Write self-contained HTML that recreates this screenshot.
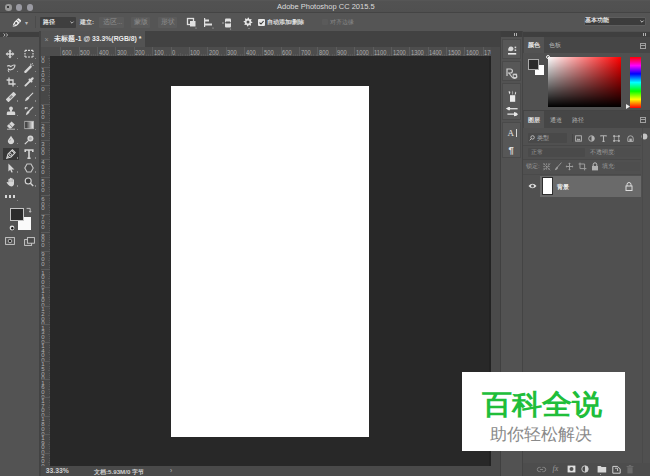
<!DOCTYPE html>
<html><head><meta charset="utf-8">
<style>
*{margin:0;padding:0;box-sizing:border-box}
html,body{width:650px;height:476px;overflow:hidden;background:#535353;font-family:"Liberation Sans",sans-serif;position:relative}
.a{position:absolute}
.t{position:absolute;white-space:nowrap;line-height:1}
svg{position:absolute;overflow:visible}
</style></head><body>

<!-- ================= title bar ================= -->
<div class="a" style="left:0;top:0;width:650px;height:12px;background:linear-gradient(#5a5a5a,#525252 1px,#505050)"></div>
<div class="a" style="left:0;top:11.5px;width:650px;height:1.5px;background:#444"></div>
<div class="a" style="left:5px;top:4.1px;width:6.6px;height:6.6px;border-radius:50%;background:#9a9a9a"></div>
<div class="a" style="left:7.2px;top:6.3px;width:2.2px;height:2.2px;border-radius:50%;background:#1a1a1a"></div>
<div class="a" style="left:15.7px;top:4.1px;width:6.6px;height:6.6px;border-radius:50%;background:#9a9aa2"></div>
<div class="a" style="left:26.9px;top:4.1px;width:6.6px;height:6.6px;border-radius:50%;background:#9a9aa2"></div>
<div class="t" style="left:277px;top:2.7px;font-size:7.5px;color:#dcdcdc">Adobe Photoshop CC 2015.5</div>

<!-- ================= options bar ================= -->
<div class="a" style="left:0;top:13px;width:650px;height:18px;background:#555"></div>
<div class="a" style="left:0;top:30.5px;width:650px;height:1px;background:#474747"></div>
<!-- pen icon -->
<svg style="left:11.6px;top:17.3px" width="10.4" height="10.4" viewBox="0 0 10 10">
 <path d="M0.7 9.3 C1 7.2 1.4 5.6 2.4 4.6 L5.4 1.6 Q6.2 0.8 7 1.6 L8.4 3 Q9.2 3.8 8.4 4.6 L5.4 7.6 C4.4 8.6 2.8 9 0.7 9.3 Z" fill="#ececec"/>
 <path d="M4.6 2.4 L7.6 5.4" stroke="#555" stroke-width="0.8"/>
 <path d="M0.9 9.1 L3.6 6.4" stroke="#555" stroke-width="0.8"/>
 <circle cx="4" cy="6" r="1.1" fill="#555"/>
</svg>
<div class="t" style="left:25px;top:20px;font-size:6px;color:#bbb">▾</div>
<div class="a" style="left:35.2px;top:16px;width:1px;height:12px;background:#4b4b4b"></div>
<!-- path dropdown -->
<div class="a" style="left:40px;top:16.5px;width:36px;height:11.5px;background:#3f3f3f;border-radius:1px"></div>
<div class="t" style="left:43px;top:19.2px;font-size:6px;color:#e8e8e8;font-weight:bold">路径</div>
<svg style="left:70.2px;top:21px" width="4" height="3" viewBox="0 0 4 3"><path d="M0.4 0.6 L2 2.2 L3.6 0.6" fill="none" stroke="#c8c8c8" stroke-width="0.9"/></svg>
<div class="t" style="left:80px;top:19.2px;font-size:6.1px;color:#d8d8d8;font-weight:bold">建立:</div>
<div class="a" style="left:99px;top:16.5px;width:25px;height:11px;background:#5b5b5b;border-radius:1px"></div>
<div class="t" style="left:103px;top:19px;font-size:6.5px;color:#8e8e8e">选区...</div>
<div class="a" style="left:131px;top:16.5px;width:19px;height:11px;background:#5b5b5b;border-radius:1px"></div>
<div class="t" style="left:134px;top:19px;font-size:6.5px;color:#8e8e8e">蒙版</div>
<div class="a" style="left:158px;top:16.5px;width:19px;height:11px;background:#5b5b5b;border-radius:1px"></div>
<div class="t" style="left:161px;top:19px;font-size:6.5px;color:#8e8e8e">形状</div>
<!-- path ops icons -->
<svg style="left:186px;top:17px" width="12" height="12" viewBox="0 0 12 12">
 <rect x="1.5" y="1.5" width="6" height="6" fill="none" stroke="#e0e0e0" stroke-width="1.3"/>
 <rect x="4" y="4" width="5.5" height="5.5" fill="#e0e0e0"/>
 <circle cx="10" cy="11" r="0.6" fill="#bbb"/>
</svg>
<svg style="left:203px;top:17px" width="12" height="12" viewBox="0 0 12 12">
 <rect x="1" y="1" width="1.2" height="9" fill="#e0e0e0"/>
 <rect x="2" y="2.5" width="4" height="2" fill="#e0e0e0"/>
 <rect x="2" y="6.5" width="7" height="2" fill="#e0e0e0"/>
 <circle cx="10" cy="11" r="0.6" fill="#bbb"/>
</svg>
<svg style="left:221px;top:16.5px" width="13" height="13" viewBox="0 0 13 13">
 <rect x="4" y="1.5" width="6" height="4" rx="1" fill="#e0e0e0"/>
 <rect x="4" y="6" width="6" height="4.5" rx="1" fill="#e0e0e0"/>
 <rect x="5" y="4.5" width="4" height="2" fill="#555"/>
 <circle cx="2" cy="6" r="0.7" fill="#ccc"/>
 <circle cx="9.5" cy="12" r="0.6" fill="#bbb"/>
</svg>
<svg style="left:243px;top:17px" width="12" height="12" viewBox="0 0 12 12"><path d="M9.40 5.00 L9.32 5.86 L7.96 6.22 L7.66 6.78 L8.11 8.11 L7.44 8.66 L6.22 7.96 L5.62 8.14 L5.00 9.40 L4.14 9.32 L3.78 7.96 L3.22 7.66 L1.89 8.11 L1.34 7.44 L2.04 6.22 L1.86 5.62 L0.60 5.00 L0.68 4.14 L2.04 3.78 L2.34 3.22 L1.89 1.89 L2.56 1.34 L3.78 2.04 L4.38 1.86 L5.00 0.60 L5.86 0.68 L6.22 2.04 L6.78 2.34 L8.11 1.89 L8.66 2.56 L7.96 3.78 L8.14 4.38Z" fill="#e6e6e6"/><circle cx="5" cy="5" r="1.5" fill="#555"/><circle cx="6" cy="11.5" r="0.6" fill="#bbb"/></svg>
<div class="a" style="left:257.5px;top:19px;width:7px;height:7px;background:#e8e8e8;border-radius:1px"></div>
<svg style="left:257.5px;top:19px" width="7" height="7" viewBox="0 0 7 7"><path d="M1.5 3.6 L3 5 L5.6 2" fill="none" stroke="#333" stroke-width="1.1"/></svg>
<div class="t" style="left:266.6px;top:19.6px;font-size:5.75px;color:#e0e0e0;font-weight:bold">自动添加/删除</div>
<div class="a" style="left:322px;top:19px;width:6px;height:6px;background:#5a5a5a;border-radius:1px"></div>
<div class="t" style="left:330px;top:19.6px;font-size:5.6px;color:#888">对齐边缘</div>
<!-- workspace dropdown -->
<div class="a" style="left:583.5px;top:16.8px;width:62px;height:9px;background:#3c3c3c;border:0.6px solid #5e5e5e;border-radius:1px"></div>
<div class="t" style="left:585.3px;top:18.3px;font-size:5.9px;color:#e8e8e8;font-weight:bold">基本功能</div>
<svg style="left:639.8px;top:20.2px" width="4" height="3" viewBox="0 0 4 3"><path d="M0.4 0.6 L2 2.2 L3.6 0.6" fill="none" stroke="#d0d0d0" stroke-width="0.9"/></svg>

<!-- ================= left toolbar ================= -->
<div class="a" style="left:0;top:31px;width:39px;height:445px;background:#535353"></div>
<div class="a" style="left:0;top:31.5px;width:40px;height:5.5px;background:#3f3f3f"></div>
<svg style="left:3px;top:32.5px" width="6" height="4" viewBox="0 0 6 4"><path d="M0.6 0.4 L2 2 L0.6 3.6 M3.2 0.4 L4.6 2 L3.2 3.6" fill="none" stroke="#c0c0c0" stroke-width="0.9"/></svg>
<div class="a" style="left:39px;top:31px;width:1.5px;height:445px;background:#434343"></div>
<div class="a" style="left:2.8px;top:147.7px;width:16.1px;height:12px;background:#383838"></div>
<svg style="left:5.1px;top:49.1px" width="10" height="10" viewBox="0 0 10 10"><path d="M5 0.6 L6.9 2.6 H5.8 V4.2 H7.4 V3.1 L9.4 5 L7.4 6.9 V5.8 H5.8 V7.4 H6.9 L5 9.4 L3.1 7.4 H4.2 V5.8 H2.6 V6.9 L0.6 5 L2.6 3.1 V4.2 H4.2 V2.6 H3.1 Z" fill="#d6d6d6"/></svg>
<svg style="left:23.6px;top:48.7px" width="10" height="10" viewBox="0 0 10 10"><path d="M1 1.4 H3 M4 1.4 H6 M7 1.4 H9 M1 8 H3 M4 8 H6 M7 8 H9 M1 1.4 V3 M1 4 V5.4 M1 6.4 V8 M9 1.4 V3 M9 4 V5.4 M9 6.4 V8" fill="none" stroke="#d6d6d6" stroke-width="1.2"/></svg>
<svg style="left:5.6px;top:62.8px" width="10" height="10" viewBox="0 0 10 10"><path d="M1.2 3.2 Q3 1.8 4.8 3.6 Q7 1.6 9 2.2 Q8.6 5.6 5.6 6.6 Q3.4 7.4 2 5.6" fill="none" stroke="#d6d6d6" stroke-width="1.1"/><path d="M2.6 6 Q1.6 8 3 9.2" fill="none" stroke="#d6d6d6" stroke-width="0.9"/></svg>
<svg style="left:23.8px;top:62.8px" width="10" height="10" viewBox="0 0 10 10"><path d="M1.4 8.8 L6.6 3.6" stroke="#d6d6d6" stroke-width="2.4" stroke-linecap="round"/><path d="M6.8 0.6 V2.4 M8.6 2.4 H9.6 M7.8 1.2 L9 0.4" stroke="#d6d6d6" stroke-width="0.9"/></svg>
<svg style="left:5.6px;top:77.3px" width="10" height="10" viewBox="0 0 10 10"><path d="M3 0.6 V7 H9.6" fill="none" stroke="#d6d6d6" stroke-width="1.3"/><path d="M0.6 3 H7 V9.6" fill="none" stroke="#d6d6d6" stroke-width="1.3"/></svg>
<svg style="left:23.8px;top:77.3px" width="10" height="10" viewBox="0 0 10 10"><path d="M1.4 8.6 L6.2 3.8" stroke="#d6d6d6" stroke-width="1.9" stroke-linecap="round"/><path d="M5.6 2.6 L7.4 4.4 M7.2 2.8 L8.6 1.4" stroke="#d6d6d6" stroke-width="2.2" stroke-linecap="round"/></svg>
<svg style="left:5.6px;top:91.9px" width="10" height="10" viewBox="0 0 10 10"><rect x="3" y="-0.6" width="4" height="11.2" rx="0.8" transform="rotate(45 5 5)" fill="#d6d6d6"/><rect x="3.9" y="3.2" width="2.2" height="3.6" transform="rotate(45 5 5)" fill="#8a8a8a"/></svg>
<svg style="left:23.8px;top:91.9px" width="10" height="10" viewBox="0 0 10 10"><path d="M8.8 1.2 L4.6 5.4" stroke="#d6d6d6" stroke-width="1.1" stroke-linecap="round"/><path d="M4.2 4.6 Q6 5.6 5.2 6.6 Q3.6 8.6 1 9.2 Q1.4 6.4 3.2 5.2 Z" fill="#d6d6d6"/></svg>
<svg style="left:5.9px;top:106.2px" width="10" height="10" viewBox="0 0 10 10"><circle cx="5" cy="2.4" r="1.9" fill="#d6d6d6"/><rect x="4" y="3.6" width="2" height="2.2" fill="#d6d6d6"/><path d="M0.8 9 V7 Q0.8 5.6 2.4 5.6 H7.6 Q9.2 5.6 9.2 7 V9 Z" fill="#d6d6d6"/></svg>
<svg style="left:23.8px;top:106.2px" width="10" height="10" viewBox="0 0 10 10"><path d="M9.2 0.8 L5 5" stroke="#d6d6d6" stroke-width="1.1"/><path d="M4.6 4.4 Q6.2 5.4 5.4 6.6 Q4 8.6 1.8 9.2 Q2 6.6 3.6 5.2 Z" fill="#d6d6d6"/><path d="M0.8 2 Q2.4 1 4 2.2" fill="none" stroke="#d6d6d6" stroke-width="1"/><circle cx="1.6" cy="2.4" r="0.9" fill="#d6d6d6"/></svg>
<svg style="left:5.9px;top:120.1px" width="10" height="10" viewBox="0 0 10 10"><path d="M1 6 L5.6 1.4 L8.8 4.6 L5 8.4 L3.4 8.4 Z" fill="#d6d6d6"/><path d="M3.2 4 L6.4 7.2" stroke="#6a6a6a" stroke-width="0.8"/><path d="M1 9.2 H9" stroke="#d6d6d6" stroke-width="0.8"/></svg>
<svg style="left:23.8px;top:120.1px" width="10" height="10" viewBox="0 0 10 10"><defs><linearGradient id="g1"><stop offset="0" stop-color="#1e1e1e"/><stop offset="1" stop-color="#f0f0f0"/></linearGradient></defs><rect x="0.8" y="1.3" width="8.6" height="7.4" fill="url(#g1)" stroke="#bdbdbd" stroke-width="0.8"/></svg>
<svg style="left:5.6px;top:134.8px" width="10" height="10" viewBox="0 0 10 10"><path d="M5 0.8 Q6 2.4 7.4 4.2 Q8.6 5.8 8 7.2 Q7 9.2 5 9.2 Q3 9.2 2 7.2 Q1.4 5.8 2.6 4.2 Q4 2.4 5 0.8Z" fill="#d6d6d6"/><path d="M3.6 6 Q4 4.6 5 4" stroke="#8a8a8a" stroke-width="0.6" fill="none"/></svg>
<svg style="left:23.8px;top:134.8px" width="10" height="10" viewBox="0 0 10 10"><circle cx="6.4" cy="3.6" r="3" fill="#d6d6d6"/><circle cx="6.4" cy="3.6" r="1.5" fill="#aaa"/><path d="M4.2 5.8 L0.8 9.2" stroke="#d6d6d6" stroke-width="1.2"/></svg>
<svg style="left:5.8px;top:148.9px" width="10" height="10" viewBox="0 0 10 10"><path d="M0.8 9.2 L2 5 L6.4 0.8 L9.2 3.6 L5 8 Z" fill="none" stroke="#d6d6d6" stroke-width="1.1"/><circle cx="4.4" cy="5.6" r="1.1" fill="none" stroke="#d6d6d6" stroke-width="0.9"/><path d="M0.8 9.2 L3.6 6.4" stroke="#d6d6d6" stroke-width="0.8"/><path d="M5.6 1.6 L8.4 4.4" stroke="#d6d6d6" stroke-width="0.9"/></svg>
<svg style="left:24.3px;top:148.9px" width="10" height="10" viewBox="0 0 10 10"><path d="M1.2 3 V1 H8.8 V3 M5 1 V9.2 M3.4 9.2 H6.6" fill="none" stroke="#d6d6d6" stroke-width="1.6"/></svg>
<svg style="left:5.6px;top:162.9px" width="10" height="10" viewBox="0 0 10 10"><path d="M2.4 0.6 L8.4 6.4 L5.6 6.4 L6.8 9.2 L5.4 9.6 L4.2 6.8 L2.4 8.6 Z" fill="#d6d6d6"/></svg>
<svg style="left:23.8px;top:162.9px" width="10" height="10" viewBox="0 0 10 10"><path d="M3 1 H7 L9.2 5 L7 9 H3 L0.8 5 Z" fill="#4a4a4a" stroke="#c8c8c8" stroke-width="1.1"/></svg>
<svg style="left:5.6px;top:176.9px" width="10" height="10" viewBox="0 0 10 10"><path d="M2.4 5.6 V2.6 Q2.4 1.8 3.1 1.8 Q3.8 1.8 3.8 2.6 V1.6 Q3.8 0.8 4.5 0.8 Q5.2 0.8 5.2 1.6 V1.8 Q5.2 1.1 5.9 1.1 Q6.6 1.1 6.6 1.8 V2.8 Q6.6 2.2 7.3 2.2 Q8 2.2 8 2.9 V6.6 Q8 9.4 5.2 9.4 Q3.2 9.4 2 7.6 L0.6 5.6 Q0.6 4.8 1.4 4.9 Z" fill="#d6d6d6"/><path d="M3.8 3 V5 M5.2 2.6 V5 M6.6 3 V5" stroke="#9a9a9a" stroke-width="0.5"/></svg>
<svg style="left:23.8px;top:176.9px" width="10" height="10" viewBox="0 0 10 10"><circle cx="4.2" cy="4" r="3" fill="#3e3e3e" stroke="#d6d6d6" stroke-width="1.1"/><path d="M6.4 6.2 L9.2 9" stroke="#d6d6d6" stroke-width="1.4"/></svg>
<div class="a" style="left:5.0px;top:195.3px;width:2.4px;height:2.4px;background:#d8d8d8"></div>
<div class="a" style="left:9.0px;top:195.3px;width:2.4px;height:2.4px;background:#d8d8d8"></div>
<div class="a" style="left:13.0px;top:195.3px;width:2.4px;height:2.4px;background:#d8d8d8"></div>
<div class="a" style="left:16.7px;top:57.6px;width:1.2px;height:1.2px;background:#8a8a8a"></div>
<div class="a" style="left:34.9px;top:57.6px;width:1.2px;height:1.2px;background:#8a8a8a"></div>
<div class="a" style="left:16.7px;top:71.3px;width:1.2px;height:1.2px;background:#8a8a8a"></div>
<div class="a" style="left:34.9px;top:71.3px;width:1.2px;height:1.2px;background:#8a8a8a"></div>
<div class="a" style="left:16.7px;top:85.8px;width:1.2px;height:1.2px;background:#8a8a8a"></div>
<div class="a" style="left:34.9px;top:85.8px;width:1.2px;height:1.2px;background:#8a8a8a"></div>
<div class="a" style="left:16.7px;top:100.4px;width:1.2px;height:1.2px;background:#8a8a8a"></div>
<div class="a" style="left:34.9px;top:100.4px;width:1.2px;height:1.2px;background:#8a8a8a"></div>
<div class="a" style="left:16.7px;top:114.7px;width:1.2px;height:1.2px;background:#8a8a8a"></div>
<div class="a" style="left:34.9px;top:114.7px;width:1.2px;height:1.2px;background:#8a8a8a"></div>
<div class="a" style="left:16.7px;top:128.6px;width:1.2px;height:1.2px;background:#8a8a8a"></div>
<div class="a" style="left:34.9px;top:128.6px;width:1.2px;height:1.2px;background:#8a8a8a"></div>
<div class="a" style="left:16.7px;top:143.3px;width:1.2px;height:1.2px;background:#8a8a8a"></div>
<div class="a" style="left:34.9px;top:143.3px;width:1.2px;height:1.2px;background:#8a8a8a"></div>
<div class="a" style="left:16.7px;top:157.4px;width:1.2px;height:1.2px;background:#8a8a8a"></div>
<div class="a" style="left:34.9px;top:157.4px;width:1.2px;height:1.2px;background:#8a8a8a"></div>
<div class="a" style="left:16.7px;top:171.4px;width:1.2px;height:1.2px;background:#8a8a8a"></div>
<div class="a" style="left:34.9px;top:171.4px;width:1.2px;height:1.2px;background:#8a8a8a"></div>
<div class="a" style="left:16.7px;top:185.4px;width:1.2px;height:1.2px;background:#8a8a8a"></div>
<div class="a" style="left:34.9px;top:185.4px;width:1.2px;height:1.2px;background:#8a8a8a"></div>
<div class="a" style="left:16.5px;top:200px;width:1.2px;height:1.2px;background:#8a8a8a"></div>
<div class="a" style="left:18.3px;top:216.5px;width:13.2px;height:13.9px;background:#fafafa"></div>
<div class="a" style="left:10px;top:207.7px;width:14px;height:13.8px;background:#2c2c2c;border:1.2px solid #c4c4c4"></div>
<svg style="left:26px;top:207px" width="6" height="6" viewBox="0 0 6 6"><path d="M0.6 1.4 H4.2 V5" fill="none" stroke="#ccc" stroke-width="0.9"/><path d="M3.2 4 L4.2 5.4 L5.2 4" fill="none" stroke="#ccc" stroke-width="0.8"/></svg>
<svg style="left:8.5px;top:225px" width="6" height="6" viewBox="0 0 6 6"><circle cx="3" cy="3" r="2.4" fill="#e0e0e0"/><circle cx="3.3" cy="3.3" r="1.2" fill="#111"/></svg>
<svg style="left:5px;top:237px" width="10" height="8" viewBox="0 0 10 8"><rect x="0.6" y="0.6" width="8.8" height="6.8" fill="none" stroke="#cfcfcf" stroke-width="0.9"/><circle cx="5" cy="4" r="1.8" fill="#2c2c2c" stroke="#cfcfcf" stroke-width="0.8"/></svg>
<svg style="left:24px;top:236.5px" width="11" height="9" viewBox="0 0 11 9"><rect x="0.6" y="2.6" width="7" height="5.8" fill="none" stroke="#cfcfcf" stroke-width="0.9"/><rect x="3.4" y="0.6" width="7" height="5.6" fill="#4a4a4a" stroke="#cfcfcf" stroke-width="0.9"/></svg>


<!-- ================= doc tab bar ================= -->
<div class="a" style="left:40.5px;top:31px;width:450.5px;height:15.8px;background:#424242"></div>
<div class="a" style="left:40.5px;top:31.3px;width:104.7px;height:15.5px;background:#535353"></div>
<div class="t" style="left:44.5px;top:35.8px;font-size:7px;color:#9a9a9a">×</div>
<div class="t" style="left:54.4px;top:35.6px;font-size:6.85px;color:#ececec;font-weight:bold">未标题-1 @ 33.3%(RGB/8) *</div>

<!-- ================= rulers ================= -->
<div class="a" style="left:40.5px;top:46.8px;width:450.5px;height:9.2px;background:#4d4d4d"></div>
<div class="a" style="left:40.5px;top:55.5px;width:9.5px;height:411px;background:#474747"></div>
<div class="a" style="left:60.28px;top:46.8px;width:0.9px;height:8.9px;background:#5c5c5c"></div>
<div class="a" style="left:62.98px;top:54.2px;width:0.6px;height:1.4px;background:#585858"></div>
<div class="a" style="left:65.27px;top:54.2px;width:0.6px;height:1.4px;background:#585858"></div>
<div class="a" style="left:67.57px;top:54.2px;width:0.6px;height:1.4px;background:#585858"></div>
<div class="a" style="left:69.87px;top:53.2px;width:0.6px;height:2.4px;background:#585858"></div>
<div class="a" style="left:72.16px;top:54.2px;width:0.6px;height:1.4px;background:#585858"></div>
<div class="a" style="left:74.46px;top:54.2px;width:0.6px;height:1.4px;background:#585858"></div>
<div class="a" style="left:76.75px;top:54.2px;width:0.6px;height:1.4px;background:#585858"></div>
<div class="t" style="left:61.88px;top:48.7px;font-size:7px;color:#aaaaaa;transform:scaleX(0.82);transform-origin:0 0;letter-spacing:0">600</div>
<div class="a" style="left:78.65px;top:46.8px;width:0.9px;height:8.9px;background:#5c5c5c"></div>
<div class="a" style="left:81.35px;top:54.2px;width:0.6px;height:1.4px;background:#585858"></div>
<div class="a" style="left:83.64px;top:54.2px;width:0.6px;height:1.4px;background:#585858"></div>
<div class="a" style="left:85.94px;top:54.2px;width:0.6px;height:1.4px;background:#585858"></div>
<div class="a" style="left:88.23px;top:53.2px;width:0.6px;height:2.4px;background:#585858"></div>
<div class="a" style="left:90.53px;top:54.2px;width:0.6px;height:1.4px;background:#585858"></div>
<div class="a" style="left:92.83px;top:54.2px;width:0.6px;height:1.4px;background:#585858"></div>
<div class="a" style="left:95.12px;top:54.2px;width:0.6px;height:1.4px;background:#585858"></div>
<div class="t" style="left:80.25px;top:48.7px;font-size:7px;color:#aaaaaa;transform:scaleX(0.82);transform-origin:0 0;letter-spacing:0">500</div>
<div class="a" style="left:97.02px;top:46.8px;width:0.9px;height:8.9px;background:#5c5c5c"></div>
<div class="a" style="left:99.72px;top:54.2px;width:0.6px;height:1.4px;background:#585858"></div>
<div class="a" style="left:102.01px;top:54.2px;width:0.6px;height:1.4px;background:#585858"></div>
<div class="a" style="left:104.31px;top:54.2px;width:0.6px;height:1.4px;background:#585858"></div>
<div class="a" style="left:106.61px;top:53.2px;width:0.6px;height:2.4px;background:#585858"></div>
<div class="a" style="left:108.9px;top:54.2px;width:0.6px;height:1.4px;background:#585858"></div>
<div class="a" style="left:111.2px;top:54.2px;width:0.6px;height:1.4px;background:#585858"></div>
<div class="a" style="left:113.49px;top:54.2px;width:0.6px;height:1.4px;background:#585858"></div>
<div class="t" style="left:98.62px;top:48.7px;font-size:7px;color:#aaaaaa;transform:scaleX(0.82);transform-origin:0 0;letter-spacing:0">400</div>
<div class="a" style="left:115.39px;top:46.8px;width:0.9px;height:8.9px;background:#5c5c5c"></div>
<div class="a" style="left:118.09px;top:54.2px;width:0.6px;height:1.4px;background:#585858"></div>
<div class="a" style="left:120.38px;top:54.2px;width:0.6px;height:1.4px;background:#585858"></div>
<div class="a" style="left:122.68px;top:54.2px;width:0.6px;height:1.4px;background:#585858"></div>
<div class="a" style="left:124.98px;top:53.2px;width:0.6px;height:2.4px;background:#585858"></div>
<div class="a" style="left:127.27px;top:54.2px;width:0.6px;height:1.4px;background:#585858"></div>
<div class="a" style="left:129.57px;top:54.2px;width:0.6px;height:1.4px;background:#585858"></div>
<div class="a" style="left:131.86px;top:54.2px;width:0.6px;height:1.4px;background:#585858"></div>
<div class="t" style="left:116.99px;top:48.7px;font-size:7px;color:#aaaaaa;transform:scaleX(0.82);transform-origin:0 0;letter-spacing:0">300</div>
<div class="a" style="left:133.76px;top:46.8px;width:0.9px;height:8.9px;background:#5c5c5c"></div>
<div class="a" style="left:136.46px;top:54.2px;width:0.6px;height:1.4px;background:#585858"></div>
<div class="a" style="left:138.75px;top:54.2px;width:0.6px;height:1.4px;background:#585858"></div>
<div class="a" style="left:141.05px;top:54.2px;width:0.6px;height:1.4px;background:#585858"></div>
<div class="a" style="left:143.34px;top:53.2px;width:0.6px;height:2.4px;background:#585858"></div>
<div class="a" style="left:145.64px;top:54.2px;width:0.6px;height:1.4px;background:#585858"></div>
<div class="a" style="left:147.94px;top:54.2px;width:0.6px;height:1.4px;background:#585858"></div>
<div class="a" style="left:150.23px;top:54.2px;width:0.6px;height:1.4px;background:#585858"></div>
<div class="t" style="left:135.36px;top:48.7px;font-size:7px;color:#aaaaaa;transform:scaleX(0.82);transform-origin:0 0;letter-spacing:0">200</div>
<div class="a" style="left:152.13px;top:46.8px;width:0.9px;height:8.9px;background:#5c5c5c"></div>
<div class="a" style="left:154.83px;top:54.2px;width:0.6px;height:1.4px;background:#585858"></div>
<div class="a" style="left:157.12px;top:54.2px;width:0.6px;height:1.4px;background:#585858"></div>
<div class="a" style="left:159.42px;top:54.2px;width:0.6px;height:1.4px;background:#585858"></div>
<div class="a" style="left:161.72px;top:53.2px;width:0.6px;height:2.4px;background:#585858"></div>
<div class="a" style="left:164.01px;top:54.2px;width:0.6px;height:1.4px;background:#585858"></div>
<div class="a" style="left:166.31px;top:54.2px;width:0.6px;height:1.4px;background:#585858"></div>
<div class="a" style="left:168.6px;top:54.2px;width:0.6px;height:1.4px;background:#585858"></div>
<div class="t" style="left:153.73px;top:48.7px;font-size:7px;color:#aaaaaa;transform:scaleX(0.82);transform-origin:0 0;letter-spacing:0">100</div>
<div class="a" style="left:170.5px;top:46.8px;width:0.9px;height:8.9px;background:#5c5c5c"></div>
<div class="a" style="left:173.2px;top:54.2px;width:0.6px;height:1.4px;background:#585858"></div>
<div class="a" style="left:175.49px;top:54.2px;width:0.6px;height:1.4px;background:#585858"></div>
<div class="a" style="left:177.79px;top:54.2px;width:0.6px;height:1.4px;background:#585858"></div>
<div class="a" style="left:180.09px;top:53.2px;width:0.6px;height:2.4px;background:#585858"></div>
<div class="a" style="left:182.38px;top:54.2px;width:0.6px;height:1.4px;background:#585858"></div>
<div class="a" style="left:184.68px;top:54.2px;width:0.6px;height:1.4px;background:#585858"></div>
<div class="a" style="left:186.97px;top:54.2px;width:0.6px;height:1.4px;background:#585858"></div>
<div class="t" style="left:172.1px;top:48.7px;font-size:7px;color:#aaaaaa;transform:scaleX(0.82);transform-origin:0 0;letter-spacing:0">0</div>
<div class="a" style="left:188.87px;top:46.8px;width:0.9px;height:8.9px;background:#5c5c5c"></div>
<div class="a" style="left:191.57px;top:54.2px;width:0.6px;height:1.4px;background:#585858"></div>
<div class="a" style="left:193.86px;top:54.2px;width:0.6px;height:1.4px;background:#585858"></div>
<div class="a" style="left:196.16px;top:54.2px;width:0.6px;height:1.4px;background:#585858"></div>
<div class="a" style="left:198.46px;top:53.2px;width:0.6px;height:2.4px;background:#585858"></div>
<div class="a" style="left:200.75px;top:54.2px;width:0.6px;height:1.4px;background:#585858"></div>
<div class="a" style="left:203.05px;top:54.2px;width:0.6px;height:1.4px;background:#585858"></div>
<div class="a" style="left:205.34px;top:54.2px;width:0.6px;height:1.4px;background:#585858"></div>
<div class="t" style="left:190.47px;top:48.7px;font-size:7px;color:#aaaaaa;transform:scaleX(0.82);transform-origin:0 0;letter-spacing:0">100</div>
<div class="a" style="left:207.24px;top:46.8px;width:0.9px;height:8.9px;background:#5c5c5c"></div>
<div class="a" style="left:209.94px;top:54.2px;width:0.6px;height:1.4px;background:#585858"></div>
<div class="a" style="left:212.23px;top:54.2px;width:0.6px;height:1.4px;background:#585858"></div>
<div class="a" style="left:214.53px;top:54.2px;width:0.6px;height:1.4px;background:#585858"></div>
<div class="a" style="left:216.83px;top:53.2px;width:0.6px;height:2.4px;background:#585858"></div>
<div class="a" style="left:219.12px;top:54.2px;width:0.6px;height:1.4px;background:#585858"></div>
<div class="a" style="left:221.42px;top:54.2px;width:0.6px;height:1.4px;background:#585858"></div>
<div class="a" style="left:223.71px;top:54.2px;width:0.6px;height:1.4px;background:#585858"></div>
<div class="t" style="left:208.84px;top:48.7px;font-size:7px;color:#aaaaaa;transform:scaleX(0.82);transform-origin:0 0;letter-spacing:0">200</div>
<div class="a" style="left:225.61px;top:46.8px;width:0.9px;height:8.9px;background:#5c5c5c"></div>
<div class="a" style="left:228.31px;top:54.2px;width:0.6px;height:1.4px;background:#585858"></div>
<div class="a" style="left:230.6px;top:54.2px;width:0.6px;height:1.4px;background:#585858"></div>
<div class="a" style="left:232.9px;top:54.2px;width:0.6px;height:1.4px;background:#585858"></div>
<div class="a" style="left:235.19px;top:53.2px;width:0.6px;height:2.4px;background:#585858"></div>
<div class="a" style="left:237.49px;top:54.2px;width:0.6px;height:1.4px;background:#585858"></div>
<div class="a" style="left:239.79px;top:54.2px;width:0.6px;height:1.4px;background:#585858"></div>
<div class="a" style="left:242.08px;top:54.2px;width:0.6px;height:1.4px;background:#585858"></div>
<div class="t" style="left:227.21px;top:48.7px;font-size:7px;color:#aaaaaa;transform:scaleX(0.82);transform-origin:0 0;letter-spacing:0">300</div>
<div class="a" style="left:243.98px;top:46.8px;width:0.9px;height:8.9px;background:#5c5c5c"></div>
<div class="a" style="left:246.68px;top:54.2px;width:0.6px;height:1.4px;background:#585858"></div>
<div class="a" style="left:248.97px;top:54.2px;width:0.6px;height:1.4px;background:#585858"></div>
<div class="a" style="left:251.27px;top:54.2px;width:0.6px;height:1.4px;background:#585858"></div>
<div class="a" style="left:253.56px;top:53.2px;width:0.6px;height:2.4px;background:#585858"></div>
<div class="a" style="left:255.86px;top:54.2px;width:0.6px;height:1.4px;background:#585858"></div>
<div class="a" style="left:258.16px;top:54.2px;width:0.6px;height:1.4px;background:#585858"></div>
<div class="a" style="left:260.45px;top:54.2px;width:0.6px;height:1.4px;background:#585858"></div>
<div class="t" style="left:245.58px;top:48.7px;font-size:7px;color:#aaaaaa;transform:scaleX(0.82);transform-origin:0 0;letter-spacing:0">400</div>
<div class="a" style="left:262.35px;top:46.8px;width:0.9px;height:8.9px;background:#5c5c5c"></div>
<div class="a" style="left:265.05px;top:54.2px;width:0.6px;height:1.4px;background:#585858"></div>
<div class="a" style="left:267.34px;top:54.2px;width:0.6px;height:1.4px;background:#585858"></div>
<div class="a" style="left:269.64px;top:54.2px;width:0.6px;height:1.4px;background:#585858"></div>
<div class="a" style="left:271.94px;top:53.2px;width:0.6px;height:2.4px;background:#585858"></div>
<div class="a" style="left:274.23px;top:54.2px;width:0.6px;height:1.4px;background:#585858"></div>
<div class="a" style="left:276.53px;top:54.2px;width:0.6px;height:1.4px;background:#585858"></div>
<div class="a" style="left:278.82px;top:54.2px;width:0.6px;height:1.4px;background:#585858"></div>
<div class="t" style="left:263.95px;top:48.7px;font-size:7px;color:#aaaaaa;transform:scaleX(0.82);transform-origin:0 0;letter-spacing:0">500</div>
<div class="a" style="left:280.72px;top:46.8px;width:0.9px;height:8.9px;background:#5c5c5c"></div>
<div class="a" style="left:283.42px;top:54.2px;width:0.6px;height:1.4px;background:#585858"></div>
<div class="a" style="left:285.71px;top:54.2px;width:0.6px;height:1.4px;background:#585858"></div>
<div class="a" style="left:288.01px;top:54.2px;width:0.6px;height:1.4px;background:#585858"></div>
<div class="a" style="left:290.31px;top:53.2px;width:0.6px;height:2.4px;background:#585858"></div>
<div class="a" style="left:292.6px;top:54.2px;width:0.6px;height:1.4px;background:#585858"></div>
<div class="a" style="left:294.9px;top:54.2px;width:0.6px;height:1.4px;background:#585858"></div>
<div class="a" style="left:297.19px;top:54.2px;width:0.6px;height:1.4px;background:#585858"></div>
<div class="t" style="left:282.32px;top:48.7px;font-size:7px;color:#aaaaaa;transform:scaleX(0.82);transform-origin:0 0;letter-spacing:0">600</div>
<div class="a" style="left:299.09px;top:46.8px;width:0.9px;height:8.9px;background:#5c5c5c"></div>
<div class="a" style="left:301.79px;top:54.2px;width:0.6px;height:1.4px;background:#585858"></div>
<div class="a" style="left:304.08px;top:54.2px;width:0.6px;height:1.4px;background:#585858"></div>
<div class="a" style="left:306.38px;top:54.2px;width:0.6px;height:1.4px;background:#585858"></div>
<div class="a" style="left:308.68px;top:53.2px;width:0.6px;height:2.4px;background:#585858"></div>
<div class="a" style="left:310.97px;top:54.2px;width:0.6px;height:1.4px;background:#585858"></div>
<div class="a" style="left:313.27px;top:54.2px;width:0.6px;height:1.4px;background:#585858"></div>
<div class="a" style="left:315.56px;top:54.2px;width:0.6px;height:1.4px;background:#585858"></div>
<div class="t" style="left:300.69px;top:48.7px;font-size:7px;color:#aaaaaa;transform:scaleX(0.82);transform-origin:0 0;letter-spacing:0">700</div>
<div class="a" style="left:317.46px;top:46.8px;width:0.9px;height:8.9px;background:#5c5c5c"></div>
<div class="a" style="left:320.16px;top:54.2px;width:0.6px;height:1.4px;background:#585858"></div>
<div class="a" style="left:322.45px;top:54.2px;width:0.6px;height:1.4px;background:#585858"></div>
<div class="a" style="left:324.75px;top:54.2px;width:0.6px;height:1.4px;background:#585858"></div>
<div class="a" style="left:327.05px;top:53.2px;width:0.6px;height:2.4px;background:#585858"></div>
<div class="a" style="left:329.34px;top:54.2px;width:0.6px;height:1.4px;background:#585858"></div>
<div class="a" style="left:331.64px;top:54.2px;width:0.6px;height:1.4px;background:#585858"></div>
<div class="a" style="left:333.93px;top:54.2px;width:0.6px;height:1.4px;background:#585858"></div>
<div class="t" style="left:319.06px;top:48.7px;font-size:7px;color:#aaaaaa;transform:scaleX(0.82);transform-origin:0 0;letter-spacing:0">800</div>
<div class="a" style="left:335.83px;top:46.8px;width:0.9px;height:8.9px;background:#5c5c5c"></div>
<div class="a" style="left:338.53px;top:54.2px;width:0.6px;height:1.4px;background:#585858"></div>
<div class="a" style="left:340.82px;top:54.2px;width:0.6px;height:1.4px;background:#585858"></div>
<div class="a" style="left:343.12px;top:54.2px;width:0.6px;height:1.4px;background:#585858"></div>
<div class="a" style="left:345.42px;top:53.2px;width:0.6px;height:2.4px;background:#585858"></div>
<div class="a" style="left:347.71px;top:54.2px;width:0.6px;height:1.4px;background:#585858"></div>
<div class="a" style="left:350.01px;top:54.2px;width:0.6px;height:1.4px;background:#585858"></div>
<div class="a" style="left:352.3px;top:54.2px;width:0.6px;height:1.4px;background:#585858"></div>
<div class="t" style="left:337.43px;top:48.7px;font-size:7px;color:#aaaaaa;transform:scaleX(0.82);transform-origin:0 0;letter-spacing:0">900</div>
<div class="a" style="left:354.2px;top:46.8px;width:0.9px;height:8.9px;background:#5c5c5c"></div>
<div class="a" style="left:356.9px;top:54.2px;width:0.6px;height:1.4px;background:#585858"></div>
<div class="a" style="left:359.19px;top:54.2px;width:0.6px;height:1.4px;background:#585858"></div>
<div class="a" style="left:361.49px;top:54.2px;width:0.6px;height:1.4px;background:#585858"></div>
<div class="a" style="left:363.79px;top:53.2px;width:0.6px;height:2.4px;background:#585858"></div>
<div class="a" style="left:366.08px;top:54.2px;width:0.6px;height:1.4px;background:#585858"></div>
<div class="a" style="left:368.38px;top:54.2px;width:0.6px;height:1.4px;background:#585858"></div>
<div class="a" style="left:370.67px;top:54.2px;width:0.6px;height:1.4px;background:#585858"></div>
<div class="t" style="left:355.8px;top:48.7px;font-size:7px;color:#aaaaaa;transform:scaleX(0.82);transform-origin:0 0;letter-spacing:0">1000</div>
<div class="a" style="left:372.57px;top:46.8px;width:0.9px;height:8.9px;background:#5c5c5c"></div>
<div class="a" style="left:375.27px;top:54.2px;width:0.6px;height:1.4px;background:#585858"></div>
<div class="a" style="left:377.56px;top:54.2px;width:0.6px;height:1.4px;background:#585858"></div>
<div class="a" style="left:379.86px;top:54.2px;width:0.6px;height:1.4px;background:#585858"></div>
<div class="a" style="left:382.16px;top:53.2px;width:0.6px;height:2.4px;background:#585858"></div>
<div class="a" style="left:384.45px;top:54.2px;width:0.6px;height:1.4px;background:#585858"></div>
<div class="a" style="left:386.75px;top:54.2px;width:0.6px;height:1.4px;background:#585858"></div>
<div class="a" style="left:389.04px;top:54.2px;width:0.6px;height:1.4px;background:#585858"></div>
<div class="t" style="left:374.17px;top:48.7px;font-size:7px;color:#aaaaaa;transform:scaleX(0.82);transform-origin:0 0;letter-spacing:0">1100</div>
<div class="a" style="left:390.94px;top:46.8px;width:0.9px;height:8.9px;background:#5c5c5c"></div>
<div class="a" style="left:393.64px;top:54.2px;width:0.6px;height:1.4px;background:#585858"></div>
<div class="a" style="left:395.93px;top:54.2px;width:0.6px;height:1.4px;background:#585858"></div>
<div class="a" style="left:398.23px;top:54.2px;width:0.6px;height:1.4px;background:#585858"></div>
<div class="a" style="left:400.53px;top:53.2px;width:0.6px;height:2.4px;background:#585858"></div>
<div class="a" style="left:402.82px;top:54.2px;width:0.6px;height:1.4px;background:#585858"></div>
<div class="a" style="left:405.12px;top:54.2px;width:0.6px;height:1.4px;background:#585858"></div>
<div class="a" style="left:407.41px;top:54.2px;width:0.6px;height:1.4px;background:#585858"></div>
<div class="t" style="left:392.54px;top:48.7px;font-size:7px;color:#aaaaaa;transform:scaleX(0.82);transform-origin:0 0;letter-spacing:0">1200</div>
<div class="a" style="left:409.31px;top:46.8px;width:0.9px;height:8.9px;background:#5c5c5c"></div>
<div class="a" style="left:412.01px;top:54.2px;width:0.6px;height:1.4px;background:#585858"></div>
<div class="a" style="left:414.3px;top:54.2px;width:0.6px;height:1.4px;background:#585858"></div>
<div class="a" style="left:416.6px;top:54.2px;width:0.6px;height:1.4px;background:#585858"></div>
<div class="a" style="left:418.9px;top:53.2px;width:0.6px;height:2.4px;background:#585858"></div>
<div class="a" style="left:421.19px;top:54.2px;width:0.6px;height:1.4px;background:#585858"></div>
<div class="a" style="left:423.49px;top:54.2px;width:0.6px;height:1.4px;background:#585858"></div>
<div class="a" style="left:425.78px;top:54.2px;width:0.6px;height:1.4px;background:#585858"></div>
<div class="t" style="left:410.91px;top:48.7px;font-size:7px;color:#aaaaaa;transform:scaleX(0.82);transform-origin:0 0;letter-spacing:0">1300</div>
<div class="a" style="left:427.68px;top:46.8px;width:0.9px;height:8.9px;background:#5c5c5c"></div>
<div class="a" style="left:430.38px;top:54.2px;width:0.6px;height:1.4px;background:#585858"></div>
<div class="a" style="left:432.67px;top:54.2px;width:0.6px;height:1.4px;background:#585858"></div>
<div class="a" style="left:434.97px;top:54.2px;width:0.6px;height:1.4px;background:#585858"></div>
<div class="a" style="left:437.27px;top:53.2px;width:0.6px;height:2.4px;background:#585858"></div>
<div class="a" style="left:439.56px;top:54.2px;width:0.6px;height:1.4px;background:#585858"></div>
<div class="a" style="left:441.86px;top:54.2px;width:0.6px;height:1.4px;background:#585858"></div>
<div class="a" style="left:444.15px;top:54.2px;width:0.6px;height:1.4px;background:#585858"></div>
<div class="t" style="left:429.28px;top:48.7px;font-size:7px;color:#aaaaaa;transform:scaleX(0.82);transform-origin:0 0;letter-spacing:0">1400</div>
<div class="a" style="left:446.05px;top:46.8px;width:0.9px;height:8.9px;background:#5c5c5c"></div>
<div class="a" style="left:448.75px;top:54.2px;width:0.6px;height:1.4px;background:#585858"></div>
<div class="a" style="left:451.04px;top:54.2px;width:0.6px;height:1.4px;background:#585858"></div>
<div class="a" style="left:453.34px;top:54.2px;width:0.6px;height:1.4px;background:#585858"></div>
<div class="a" style="left:455.64px;top:53.2px;width:0.6px;height:2.4px;background:#585858"></div>
<div class="a" style="left:457.93px;top:54.2px;width:0.6px;height:1.4px;background:#585858"></div>
<div class="a" style="left:460.23px;top:54.2px;width:0.6px;height:1.4px;background:#585858"></div>
<div class="a" style="left:462.52px;top:54.2px;width:0.6px;height:1.4px;background:#585858"></div>
<div class="t" style="left:447.65px;top:48.7px;font-size:7px;color:#aaaaaa;transform:scaleX(0.82);transform-origin:0 0;letter-spacing:0">1500</div>
<div class="a" style="left:464.42px;top:46.8px;width:0.9px;height:8.9px;background:#5c5c5c"></div>
<div class="a" style="left:467.12px;top:54.2px;width:0.6px;height:1.4px;background:#585858"></div>
<div class="a" style="left:469.41px;top:54.2px;width:0.6px;height:1.4px;background:#585858"></div>
<div class="a" style="left:471.71px;top:54.2px;width:0.6px;height:1.4px;background:#585858"></div>
<div class="a" style="left:474.01px;top:53.2px;width:0.6px;height:2.4px;background:#585858"></div>
<div class="a" style="left:476.3px;top:54.2px;width:0.6px;height:1.4px;background:#585858"></div>
<div class="a" style="left:478.6px;top:54.2px;width:0.6px;height:1.4px;background:#585858"></div>
<div class="a" style="left:480.89px;top:54.2px;width:0.6px;height:1.4px;background:#585858"></div>
<div class="t" style="left:466.02px;top:48.7px;font-size:7px;color:#aaaaaa;transform:scaleX(0.82);transform-origin:0 0;letter-spacing:0">1600</div>
<div class="a" style="left:482.79px;top:46.8px;width:0.9px;height:8.9px;background:#5c5c5c"></div>
<div class="a" style="left:485.49px;top:54.2px;width:0.6px;height:1.4px;background:#585858"></div>
<div class="a" style="left:487.78px;top:54.2px;width:0.6px;height:1.4px;background:#585858"></div>
<div class="t" style="left:484.39px;top:48.7px;font-size:7px;color:#aaaaaa;transform:scaleX(0.82);transform-origin:0 0;letter-spacing:0">1700</div>

<div class="a" style="left:0;top:56px;width:60px;height:410px;overflow:hidden"><div class="a" style="left:0;top:-56px;width:60px;height:476px"><div class="a" style="left:47.6px;top:58.04px;width:2.4px;height:0.6px;background:#575757"></div>
<div class="a" style="left:48.6px;top:60.34px;width:1.4px;height:0.6px;background:#575757"></div>
<div class="a" style="left:48.6px;top:62.64px;width:1.4px;height:0.6px;background:#575757"></div>
<div class="a" style="left:48.6px;top:64.93px;width:1.4px;height:0.6px;background:#575757"></div>
<div class="t" style="left:40.8px;top:50.06px;font-size:6px;color:#b0b0b0;line-height:4.7px;text-align:center;width:4px"><div style="height:4.7px">2</div><div style="height:4.7px">0</div><div style="height:4.7px">0</div></div>
<div class="a" style="left:41px;top:66.83px;width:9px;height:0.9px;background:#5a5a5a"></div>
<div class="a" style="left:48.6px;top:69.53px;width:1.4px;height:0.6px;background:#575757"></div>
<div class="a" style="left:48.6px;top:71.82px;width:1.4px;height:0.6px;background:#575757"></div>
<div class="a" style="left:48.6px;top:74.12px;width:1.4px;height:0.6px;background:#575757"></div>
<div class="a" style="left:47.6px;top:76.41px;width:2.4px;height:0.6px;background:#575757"></div>
<div class="a" style="left:48.6px;top:78.71px;width:1.4px;height:0.6px;background:#575757"></div>
<div class="a" style="left:48.6px;top:81.01px;width:1.4px;height:0.6px;background:#575757"></div>
<div class="a" style="left:48.6px;top:83.3px;width:1.4px;height:0.6px;background:#575757"></div>
<div class="t" style="left:40.8px;top:68.43px;font-size:6px;color:#b0b0b0;line-height:4.7px;text-align:center;width:4px"><div style="height:4.7px">1</div><div style="height:4.7px">0</div><div style="height:4.7px">0</div></div>
<div class="a" style="left:41px;top:85.2px;width:9px;height:0.9px;background:#5a5a5a"></div>
<div class="a" style="left:48.6px;top:87.9px;width:1.4px;height:0.6px;background:#575757"></div>
<div class="a" style="left:48.6px;top:90.19px;width:1.4px;height:0.6px;background:#575757"></div>
<div class="a" style="left:48.6px;top:92.49px;width:1.4px;height:0.6px;background:#575757"></div>
<div class="a" style="left:47.6px;top:94.78px;width:2.4px;height:0.6px;background:#575757"></div>
<div class="a" style="left:48.6px;top:97.08px;width:1.4px;height:0.6px;background:#575757"></div>
<div class="a" style="left:48.6px;top:99.38px;width:1.4px;height:0.6px;background:#575757"></div>
<div class="a" style="left:48.6px;top:101.67px;width:1.4px;height:0.6px;background:#575757"></div>
<div class="t" style="left:40.8px;top:86.8px;font-size:6px;color:#b0b0b0;line-height:4.7px;text-align:center;width:4px"><div style="height:4.7px">0</div></div>
<div class="a" style="left:41px;top:103.57px;width:9px;height:0.9px;background:#5a5a5a"></div>
<div class="a" style="left:48.6px;top:106.27px;width:1.4px;height:0.6px;background:#575757"></div>
<div class="a" style="left:48.6px;top:108.56px;width:1.4px;height:0.6px;background:#575757"></div>
<div class="a" style="left:48.6px;top:110.86px;width:1.4px;height:0.6px;background:#575757"></div>
<div class="a" style="left:47.6px;top:113.16px;width:2.4px;height:0.6px;background:#575757"></div>
<div class="a" style="left:48.6px;top:115.45px;width:1.4px;height:0.6px;background:#575757"></div>
<div class="a" style="left:48.6px;top:117.75px;width:1.4px;height:0.6px;background:#575757"></div>
<div class="a" style="left:48.6px;top:120.04px;width:1.4px;height:0.6px;background:#575757"></div>
<div class="t" style="left:40.8px;top:105.17px;font-size:6px;color:#b0b0b0;line-height:4.7px;text-align:center;width:4px"><div style="height:4.7px">1</div><div style="height:4.7px">0</div><div style="height:4.7px">0</div></div>
<div class="a" style="left:41px;top:121.94px;width:9px;height:0.9px;background:#5a5a5a"></div>
<div class="a" style="left:48.6px;top:124.64px;width:1.4px;height:0.6px;background:#575757"></div>
<div class="a" style="left:48.6px;top:126.93px;width:1.4px;height:0.6px;background:#575757"></div>
<div class="a" style="left:48.6px;top:129.23px;width:1.4px;height:0.6px;background:#575757"></div>
<div class="a" style="left:47.6px;top:131.53px;width:2.4px;height:0.6px;background:#575757"></div>
<div class="a" style="left:48.6px;top:133.82px;width:1.4px;height:0.6px;background:#575757"></div>
<div class="a" style="left:48.6px;top:136.12px;width:1.4px;height:0.6px;background:#575757"></div>
<div class="a" style="left:48.6px;top:138.41px;width:1.4px;height:0.6px;background:#575757"></div>
<div class="t" style="left:40.8px;top:123.54px;font-size:6px;color:#b0b0b0;line-height:4.7px;text-align:center;width:4px"><div style="height:4.7px">2</div><div style="height:4.7px">0</div><div style="height:4.7px">0</div></div>
<div class="a" style="left:41px;top:140.31px;width:9px;height:0.9px;background:#5a5a5a"></div>
<div class="a" style="left:48.6px;top:143.01px;width:1.4px;height:0.6px;background:#575757"></div>
<div class="a" style="left:48.6px;top:145.3px;width:1.4px;height:0.6px;background:#575757"></div>
<div class="a" style="left:48.6px;top:147.6px;width:1.4px;height:0.6px;background:#575757"></div>
<div class="a" style="left:47.6px;top:149.89px;width:2.4px;height:0.6px;background:#575757"></div>
<div class="a" style="left:48.6px;top:152.19px;width:1.4px;height:0.6px;background:#575757"></div>
<div class="a" style="left:48.6px;top:154.49px;width:1.4px;height:0.6px;background:#575757"></div>
<div class="a" style="left:48.6px;top:156.78px;width:1.4px;height:0.6px;background:#575757"></div>
<div class="t" style="left:40.8px;top:141.91px;font-size:6px;color:#b0b0b0;line-height:4.7px;text-align:center;width:4px"><div style="height:4.7px">3</div><div style="height:4.7px">0</div><div style="height:4.7px">0</div></div>
<div class="a" style="left:41px;top:158.68px;width:9px;height:0.9px;background:#5a5a5a"></div>
<div class="a" style="left:48.6px;top:161.38px;width:1.4px;height:0.6px;background:#575757"></div>
<div class="a" style="left:48.6px;top:163.67px;width:1.4px;height:0.6px;background:#575757"></div>
<div class="a" style="left:48.6px;top:165.97px;width:1.4px;height:0.6px;background:#575757"></div>
<div class="a" style="left:47.6px;top:168.26px;width:2.4px;height:0.6px;background:#575757"></div>
<div class="a" style="left:48.6px;top:170.56px;width:1.4px;height:0.6px;background:#575757"></div>
<div class="a" style="left:48.6px;top:172.86px;width:1.4px;height:0.6px;background:#575757"></div>
<div class="a" style="left:48.6px;top:175.15px;width:1.4px;height:0.6px;background:#575757"></div>
<div class="t" style="left:40.8px;top:160.28px;font-size:6px;color:#b0b0b0;line-height:4.7px;text-align:center;width:4px"><div style="height:4.7px">4</div><div style="height:4.7px">0</div><div style="height:4.7px">0</div></div>
<div class="a" style="left:41px;top:177.05px;width:9px;height:0.9px;background:#5a5a5a"></div>
<div class="a" style="left:48.6px;top:179.75px;width:1.4px;height:0.6px;background:#575757"></div>
<div class="a" style="left:48.6px;top:182.04px;width:1.4px;height:0.6px;background:#575757"></div>
<div class="a" style="left:48.6px;top:184.34px;width:1.4px;height:0.6px;background:#575757"></div>
<div class="a" style="left:47.6px;top:186.63px;width:2.4px;height:0.6px;background:#575757"></div>
<div class="a" style="left:48.6px;top:188.93px;width:1.4px;height:0.6px;background:#575757"></div>
<div class="a" style="left:48.6px;top:191.23px;width:1.4px;height:0.6px;background:#575757"></div>
<div class="a" style="left:48.6px;top:193.52px;width:1.4px;height:0.6px;background:#575757"></div>
<div class="t" style="left:40.8px;top:178.65px;font-size:6px;color:#b0b0b0;line-height:4.7px;text-align:center;width:4px"><div style="height:4.7px">5</div><div style="height:4.7px">0</div><div style="height:4.7px">0</div></div>
<div class="a" style="left:41px;top:195.42px;width:9px;height:0.9px;background:#5a5a5a"></div>
<div class="a" style="left:48.6px;top:198.12px;width:1.4px;height:0.6px;background:#575757"></div>
<div class="a" style="left:48.6px;top:200.41px;width:1.4px;height:0.6px;background:#575757"></div>
<div class="a" style="left:48.6px;top:202.71px;width:1.4px;height:0.6px;background:#575757"></div>
<div class="a" style="left:47.6px;top:205.0px;width:2.4px;height:0.6px;background:#575757"></div>
<div class="a" style="left:48.6px;top:207.3px;width:1.4px;height:0.6px;background:#575757"></div>
<div class="a" style="left:48.6px;top:209.6px;width:1.4px;height:0.6px;background:#575757"></div>
<div class="a" style="left:48.6px;top:211.89px;width:1.4px;height:0.6px;background:#575757"></div>
<div class="t" style="left:40.8px;top:197.02px;font-size:6px;color:#b0b0b0;line-height:4.7px;text-align:center;width:4px"><div style="height:4.7px">6</div><div style="height:4.7px">0</div><div style="height:4.7px">0</div></div>
<div class="a" style="left:41px;top:213.79px;width:9px;height:0.9px;background:#5a5a5a"></div>
<div class="a" style="left:48.6px;top:216.49px;width:1.4px;height:0.6px;background:#575757"></div>
<div class="a" style="left:48.6px;top:218.78px;width:1.4px;height:0.6px;background:#575757"></div>
<div class="a" style="left:48.6px;top:221.08px;width:1.4px;height:0.6px;background:#575757"></div>
<div class="a" style="left:47.6px;top:223.38px;width:2.4px;height:0.6px;background:#575757"></div>
<div class="a" style="left:48.6px;top:225.67px;width:1.4px;height:0.6px;background:#575757"></div>
<div class="a" style="left:48.6px;top:227.97px;width:1.4px;height:0.6px;background:#575757"></div>
<div class="a" style="left:48.6px;top:230.26px;width:1.4px;height:0.6px;background:#575757"></div>
<div class="t" style="left:40.8px;top:215.39px;font-size:6px;color:#b0b0b0;line-height:4.7px;text-align:center;width:4px"><div style="height:4.7px">7</div><div style="height:4.7px">0</div><div style="height:4.7px">0</div></div>
<div class="a" style="left:41px;top:232.16px;width:9px;height:0.9px;background:#5a5a5a"></div>
<div class="a" style="left:48.6px;top:234.86px;width:1.4px;height:0.6px;background:#575757"></div>
<div class="a" style="left:48.6px;top:237.15px;width:1.4px;height:0.6px;background:#575757"></div>
<div class="a" style="left:48.6px;top:239.45px;width:1.4px;height:0.6px;background:#575757"></div>
<div class="a" style="left:47.6px;top:241.75px;width:2.4px;height:0.6px;background:#575757"></div>
<div class="a" style="left:48.6px;top:244.04px;width:1.4px;height:0.6px;background:#575757"></div>
<div class="a" style="left:48.6px;top:246.34px;width:1.4px;height:0.6px;background:#575757"></div>
<div class="a" style="left:48.6px;top:248.63px;width:1.4px;height:0.6px;background:#575757"></div>
<div class="t" style="left:40.8px;top:233.76px;font-size:6px;color:#b0b0b0;line-height:4.7px;text-align:center;width:4px"><div style="height:4.7px">8</div><div style="height:4.7px">0</div><div style="height:4.7px">0</div></div>
<div class="a" style="left:41px;top:250.53px;width:9px;height:0.9px;background:#5a5a5a"></div>
<div class="a" style="left:48.6px;top:253.23px;width:1.4px;height:0.6px;background:#575757"></div>
<div class="a" style="left:48.6px;top:255.52px;width:1.4px;height:0.6px;background:#575757"></div>
<div class="a" style="left:48.6px;top:257.82px;width:1.4px;height:0.6px;background:#575757"></div>
<div class="a" style="left:47.6px;top:260.12px;width:2.4px;height:0.6px;background:#575757"></div>
<div class="a" style="left:48.6px;top:262.41px;width:1.4px;height:0.6px;background:#575757"></div>
<div class="a" style="left:48.6px;top:264.71px;width:1.4px;height:0.6px;background:#575757"></div>
<div class="a" style="left:48.6px;top:267.0px;width:1.4px;height:0.6px;background:#575757"></div>
<div class="t" style="left:40.8px;top:252.13px;font-size:6px;color:#b0b0b0;line-height:4.7px;text-align:center;width:4px"><div style="height:4.7px">9</div><div style="height:4.7px">0</div><div style="height:4.7px">0</div></div>
<div class="a" style="left:41px;top:268.9px;width:9px;height:0.9px;background:#5a5a5a"></div>
<div class="a" style="left:48.6px;top:271.6px;width:1.4px;height:0.6px;background:#575757"></div>
<div class="a" style="left:48.6px;top:273.89px;width:1.4px;height:0.6px;background:#575757"></div>
<div class="a" style="left:48.6px;top:276.19px;width:1.4px;height:0.6px;background:#575757"></div>
<div class="a" style="left:47.6px;top:278.49px;width:2.4px;height:0.6px;background:#575757"></div>
<div class="a" style="left:48.6px;top:280.78px;width:1.4px;height:0.6px;background:#575757"></div>
<div class="a" style="left:48.6px;top:283.08px;width:1.4px;height:0.6px;background:#575757"></div>
<div class="a" style="left:48.6px;top:285.37px;width:1.4px;height:0.6px;background:#575757"></div>
<div class="t" style="left:40.8px;top:270.5px;font-size:6px;color:#b0b0b0;line-height:4.7px;text-align:center;width:4px"><div style="height:4.7px">1</div><div style="height:4.7px">0</div><div style="height:4.7px">0</div><div style="height:4.7px">0</div></div>
<div class="a" style="left:41px;top:287.27px;width:9px;height:0.9px;background:#5a5a5a"></div>
<div class="a" style="left:48.6px;top:289.97px;width:1.4px;height:0.6px;background:#575757"></div>
<div class="a" style="left:48.6px;top:292.26px;width:1.4px;height:0.6px;background:#575757"></div>
<div class="a" style="left:48.6px;top:294.56px;width:1.4px;height:0.6px;background:#575757"></div>
<div class="a" style="left:47.6px;top:296.86px;width:2.4px;height:0.6px;background:#575757"></div>
<div class="a" style="left:48.6px;top:299.15px;width:1.4px;height:0.6px;background:#575757"></div>
<div class="a" style="left:48.6px;top:301.45px;width:1.4px;height:0.6px;background:#575757"></div>
<div class="a" style="left:48.6px;top:303.74px;width:1.4px;height:0.6px;background:#575757"></div>
<div class="t" style="left:40.8px;top:288.87px;font-size:6px;color:#b0b0b0;line-height:4.7px;text-align:center;width:4px"><div style="height:4.7px">1</div><div style="height:4.7px">1</div><div style="height:4.7px">0</div><div style="height:4.7px">0</div></div>
<div class="a" style="left:41px;top:305.64px;width:9px;height:0.9px;background:#5a5a5a"></div>
<div class="a" style="left:48.6px;top:308.34px;width:1.4px;height:0.6px;background:#575757"></div>
<div class="a" style="left:48.6px;top:310.63px;width:1.4px;height:0.6px;background:#575757"></div>
<div class="a" style="left:48.6px;top:312.93px;width:1.4px;height:0.6px;background:#575757"></div>
<div class="a" style="left:47.6px;top:315.22px;width:2.4px;height:0.6px;background:#575757"></div>
<div class="a" style="left:48.6px;top:317.52px;width:1.4px;height:0.6px;background:#575757"></div>
<div class="a" style="left:48.6px;top:319.82px;width:1.4px;height:0.6px;background:#575757"></div>
<div class="a" style="left:48.6px;top:322.11px;width:1.4px;height:0.6px;background:#575757"></div>
<div class="t" style="left:40.8px;top:307.24px;font-size:6px;color:#b0b0b0;line-height:4.7px;text-align:center;width:4px"><div style="height:4.7px">1</div><div style="height:4.7px">2</div><div style="height:4.7px">0</div><div style="height:4.7px">0</div></div>
<div class="a" style="left:41px;top:324.01px;width:9px;height:0.9px;background:#5a5a5a"></div>
<div class="a" style="left:48.6px;top:326.71px;width:1.4px;height:0.6px;background:#575757"></div>
<div class="a" style="left:48.6px;top:329.0px;width:1.4px;height:0.6px;background:#575757"></div>
<div class="a" style="left:48.6px;top:331.3px;width:1.4px;height:0.6px;background:#575757"></div>
<div class="a" style="left:47.6px;top:333.59px;width:2.4px;height:0.6px;background:#575757"></div>
<div class="a" style="left:48.6px;top:335.89px;width:1.4px;height:0.6px;background:#575757"></div>
<div class="a" style="left:48.6px;top:338.19px;width:1.4px;height:0.6px;background:#575757"></div>
<div class="a" style="left:48.6px;top:340.48px;width:1.4px;height:0.6px;background:#575757"></div>
<div class="t" style="left:40.8px;top:325.61px;font-size:6px;color:#b0b0b0;line-height:4.7px;text-align:center;width:4px"><div style="height:4.7px">1</div><div style="height:4.7px">3</div><div style="height:4.7px">0</div><div style="height:4.7px">0</div></div>
<div class="a" style="left:41px;top:342.38px;width:9px;height:0.9px;background:#5a5a5a"></div>
<div class="a" style="left:48.6px;top:345.08px;width:1.4px;height:0.6px;background:#575757"></div>
<div class="a" style="left:48.6px;top:347.37px;width:1.4px;height:0.6px;background:#575757"></div>
<div class="a" style="left:48.6px;top:349.67px;width:1.4px;height:0.6px;background:#575757"></div>
<div class="a" style="left:47.6px;top:351.96px;width:2.4px;height:0.6px;background:#575757"></div>
<div class="a" style="left:48.6px;top:354.26px;width:1.4px;height:0.6px;background:#575757"></div>
<div class="a" style="left:48.6px;top:356.56px;width:1.4px;height:0.6px;background:#575757"></div>
<div class="a" style="left:48.6px;top:358.85px;width:1.4px;height:0.6px;background:#575757"></div>
<div class="t" style="left:40.8px;top:343.98px;font-size:6px;color:#b0b0b0;line-height:4.7px;text-align:center;width:4px"><div style="height:4.7px">1</div><div style="height:4.7px">4</div><div style="height:4.7px">0</div><div style="height:4.7px">0</div></div>
<div class="a" style="left:41px;top:360.75px;width:9px;height:0.9px;background:#5a5a5a"></div>
<div class="a" style="left:48.6px;top:363.45px;width:1.4px;height:0.6px;background:#575757"></div>
<div class="a" style="left:48.6px;top:365.74px;width:1.4px;height:0.6px;background:#575757"></div>
<div class="a" style="left:48.6px;top:368.04px;width:1.4px;height:0.6px;background:#575757"></div>
<div class="a" style="left:47.6px;top:370.33px;width:2.4px;height:0.6px;background:#575757"></div>
<div class="a" style="left:48.6px;top:372.63px;width:1.4px;height:0.6px;background:#575757"></div>
<div class="a" style="left:48.6px;top:374.93px;width:1.4px;height:0.6px;background:#575757"></div>
<div class="a" style="left:48.6px;top:377.22px;width:1.4px;height:0.6px;background:#575757"></div>
<div class="t" style="left:40.8px;top:362.35px;font-size:6px;color:#b0b0b0;line-height:4.7px;text-align:center;width:4px"><div style="height:4.7px">1</div><div style="height:4.7px">5</div><div style="height:4.7px">0</div><div style="height:4.7px">0</div></div>
<div class="a" style="left:41px;top:379.12px;width:9px;height:0.9px;background:#5a5a5a"></div>
<div class="a" style="left:48.6px;top:381.82px;width:1.4px;height:0.6px;background:#575757"></div>
<div class="a" style="left:48.6px;top:384.11px;width:1.4px;height:0.6px;background:#575757"></div>
<div class="a" style="left:48.6px;top:386.41px;width:1.4px;height:0.6px;background:#575757"></div>
<div class="a" style="left:47.6px;top:388.7px;width:2.4px;height:0.6px;background:#575757"></div>
<div class="a" style="left:48.6px;top:391.0px;width:1.4px;height:0.6px;background:#575757"></div>
<div class="a" style="left:48.6px;top:393.3px;width:1.4px;height:0.6px;background:#575757"></div>
<div class="a" style="left:48.6px;top:395.59px;width:1.4px;height:0.6px;background:#575757"></div>
<div class="t" style="left:40.8px;top:380.72px;font-size:6px;color:#b0b0b0;line-height:4.7px;text-align:center;width:4px"><div style="height:4.7px">1</div><div style="height:4.7px">6</div><div style="height:4.7px">0</div><div style="height:4.7px">0</div></div>
<div class="a" style="left:41px;top:397.49px;width:9px;height:0.9px;background:#5a5a5a"></div>
<div class="a" style="left:48.6px;top:400.19px;width:1.4px;height:0.6px;background:#575757"></div>
<div class="a" style="left:48.6px;top:402.48px;width:1.4px;height:0.6px;background:#575757"></div>
<div class="a" style="left:48.6px;top:404.78px;width:1.4px;height:0.6px;background:#575757"></div>
<div class="a" style="left:47.6px;top:407.07px;width:2.4px;height:0.6px;background:#575757"></div>
<div class="a" style="left:48.6px;top:409.37px;width:1.4px;height:0.6px;background:#575757"></div>
<div class="a" style="left:48.6px;top:411.67px;width:1.4px;height:0.6px;background:#575757"></div>
<div class="a" style="left:48.6px;top:413.96px;width:1.4px;height:0.6px;background:#575757"></div>
<div class="t" style="left:40.8px;top:399.09px;font-size:6px;color:#b0b0b0;line-height:4.7px;text-align:center;width:4px"><div style="height:4.7px">1</div><div style="height:4.7px">7</div><div style="height:4.7px">0</div><div style="height:4.7px">0</div></div>
<div class="a" style="left:41px;top:415.86px;width:9px;height:0.9px;background:#5a5a5a"></div>
<div class="a" style="left:48.6px;top:418.56px;width:1.4px;height:0.6px;background:#575757"></div>
<div class="a" style="left:48.6px;top:420.85px;width:1.4px;height:0.6px;background:#575757"></div>
<div class="a" style="left:48.6px;top:423.15px;width:1.4px;height:0.6px;background:#575757"></div>
<div class="a" style="left:47.6px;top:425.44px;width:2.4px;height:0.6px;background:#575757"></div>
<div class="a" style="left:48.6px;top:427.74px;width:1.4px;height:0.6px;background:#575757"></div>
<div class="a" style="left:48.6px;top:430.04px;width:1.4px;height:0.6px;background:#575757"></div>
<div class="a" style="left:48.6px;top:432.33px;width:1.4px;height:0.6px;background:#575757"></div>
<div class="t" style="left:40.8px;top:417.46px;font-size:6px;color:#b0b0b0;line-height:4.7px;text-align:center;width:4px"><div style="height:4.7px">1</div><div style="height:4.7px">8</div><div style="height:4.7px">0</div><div style="height:4.7px">0</div></div>
<div class="a" style="left:41px;top:434.23px;width:9px;height:0.9px;background:#5a5a5a"></div>
<div class="a" style="left:48.6px;top:436.93px;width:1.4px;height:0.6px;background:#575757"></div>
<div class="a" style="left:48.6px;top:439.22px;width:1.4px;height:0.6px;background:#575757"></div>
<div class="a" style="left:48.6px;top:441.52px;width:1.4px;height:0.6px;background:#575757"></div>
<div class="a" style="left:47.6px;top:443.81px;width:2.4px;height:0.6px;background:#575757"></div>
<div class="a" style="left:48.6px;top:446.11px;width:1.4px;height:0.6px;background:#575757"></div>
<div class="a" style="left:48.6px;top:448.41px;width:1.4px;height:0.6px;background:#575757"></div>
<div class="a" style="left:48.6px;top:450.7px;width:1.4px;height:0.6px;background:#575757"></div>
<div class="t" style="left:40.8px;top:435.83px;font-size:6px;color:#b0b0b0;line-height:4.7px;text-align:center;width:4px"><div style="height:4.7px">1</div><div style="height:4.7px">9</div><div style="height:4.7px">0</div><div style="height:4.7px">0</div></div>
<div class="a" style="left:41px;top:452.6px;width:9px;height:0.9px;background:#5a5a5a"></div>
<div class="a" style="left:48.6px;top:455.3px;width:1.4px;height:0.6px;background:#575757"></div>
<div class="a" style="left:48.6px;top:457.59px;width:1.4px;height:0.6px;background:#575757"></div>
<div class="a" style="left:48.6px;top:459.89px;width:1.4px;height:0.6px;background:#575757"></div>
<div class="a" style="left:47.6px;top:462.19px;width:2.4px;height:0.6px;background:#575757"></div>
<div class="a" style="left:48.6px;top:464.48px;width:1.4px;height:0.6px;background:#575757"></div>
<div class="t" style="left:40.8px;top:454.2px;font-size:6px;color:#b0b0b0;line-height:4.7px;text-align:center;width:4px"><div style="height:4.7px">2</div><div style="height:4.7px">0</div><div style="height:4.7px">0</div><div style="height:4.7px">0</div></div>
</div></div>

<!-- ================= canvas ================= -->
<div class="a" style="left:50px;top:56px;width:441px;height:410px;background:#282828"></div>
<div class="a" style="left:489px;top:56px;width:1.5px;height:410px;background:#222"></div>
<div class="a" style="left:170.8px;top:85.6px;width:198.5px;height:351.5px;background:#fff"></div>

<!-- ================= status bar ================= -->
<div class="a" style="left:40.5px;top:466px;width:450.5px;height:10px;background:#4a4a4a"></div>
<div class="t" style="left:45.7px;top:468.3px;font-size:6.8px;color:#d0d0d0;font-weight:bold">33.33%</div>
<div class="t" style="left:94px;top:468.5px;font-size:6.2px;color:#d0d0d0;font-weight:bold">文档:5.93M/0 字节</div>
<div class="t" style="left:170px;top:468px;font-size:6.5px;color:#bbb">›</div>

<!-- ================= right scroll col / icon col ================= -->
<div class="a" style="left:490.5px;top:31px;width:9.5px;height:445px;background:#4a4a4a"></div><div class="a" style="left:490.5px;top:31px;width:9.5px;height:15.8px;background:#424242"></div>
<div class="a" style="left:499.5px;top:31px;width:1.5px;height:445px;background:#404040"></div>
<div class="a" style="left:501px;top:31px;width:20.5px;height:445px;background:#525252"></div>
<div class="a" style="left:501px;top:31px;width:21px;height:6px;background:#3e3e3e"></div>
<div class="a" style="left:513.6px;top:32.8px;width:0.9px;height:3px;background:#b0b0b0"></div><div class="a" style="left:515.6px;top:32.8px;width:0.9px;height:3px;background:#b0b0b0"></div>
<div class="a" style="left:521.5px;top:31px;width:1.5px;height:445px;background:#444"></div>
<div class="a" style="left:501.7px;top:38.7px;width:19px;height:20.5px;background:#575757;border:1px solid #4a4a4a"></div>
<div class="a" style="left:501.7px;top:60.7px;width:19px;height:20.5px;background:#575757;border:1px solid #4a4a4a"></div>
<div class="a" style="left:501.7px;top:83.2px;width:19px;height:37.2px;background:#575757;border:1px solid #4a4a4a"></div>
<div class="a" style="left:501.7px;top:121.7px;width:19px;height:36.7px;background:#575757;border:1px solid #4a4a4a"></div>
<svg style="left:506px;top:45px" width="12" height="11" viewBox="0 0 12 11"><path d="M2 5.5 Q2 1.5 5 1.5 Q7.5 1.5 7.5 4 Q7.5 6 5 6.2 Z" fill="#d8d8d8"/><rect x="8.6" y="1.6" width="1.6" height="1.6" fill="#d8d8d8"/><rect x="8.6" y="4.4" width="1.6" height="1.6" fill="#d8d8d8"/><rect x="2" y="8" width="8.2" height="1.6" fill="#e8e8e8"/></svg>
<svg style="left:504.5px;top:67px" width="14" height="13" viewBox="0 0 14 13"><path d="M2 9 V2 H5.4 Q7.4 2 7.4 4 Q7.4 6 5.4 6 H3" fill="none" stroke="#d0d0d0" stroke-width="1.2"/><path d="M4 6 L6.5 9.5 Q8 11.8 10.4 11.2 Q12.2 10.6 11.6 8.6 Q11 7 9.2 7.6" fill="none" stroke="#d0d0d0" stroke-width="1.2"/><rect x="8.2" y="7.2" width="3.4" height="3.4" fill="none" stroke="#d0d0d0" stroke-width="1"/></svg>
<svg style="left:506.5px;top:89.5px" width="11" height="12.5" viewBox="0 0 11 12.5"><path d="M2.5 4.5 L1.5 1.5 Q2.6 0.8 3.4 2 Z M5.5 4.5 L5.5 0.6 Q6.4 1.4 6 4.5 Z M7.6 4.5 L8.6 1.6 Q9.8 2.2 8.6 4.6 Z" fill="#e8e8e8"/><rect x="3" y="5.2" width="5.2" height="6.6" fill="#ececec"/></svg>
<svg style="left:504.5px;top:105.5px" width="14" height="11" viewBox="0 0 14 11"><path d="M0.8 2.6 L3.6 1 H5 V4.2 H3.6 Z" fill="#e8e8e8"/><rect x="5" y="2" width="7.6" height="1.4" fill="#d8d8d8"/><path d="M2.4 7.4 H9 V6 Q12 6.4 13 8.2 Q12 10 9 10.2 V8.8 H2.4 Z" fill="#e8e8e8"/></svg>
<div class="t" style="left:507.5px;top:129.2px;font-size:9px;color:#e0e0e0;font-family:\"Liberation Sans\",sans-serif;transform:scaleX(0.95)">A</div>
<div class="a" style="left:515.5px;top:128.8px;width:0.9px;height:8.5px;background:#d8d8d8"></div>
<div class="t" style="left:508.5px;top:144.5px;font-size:9.5px;color:#e0e0e0;font-weight:bold">¶</div>


<!-- ================= right panels ================= -->
<div class="a" style="left:523px;top:31px;width:127px;height:445px;background:#505050"></div>
<div class="a" style="left:523px;top:31.5px;width:127px;height:5.5px;background:#3f3f3f"></div>
<div class="a" style="left:642.6px;top:32.8px;width:0.9px;height:3px;background:#b0b0b0"></div><div class="a" style="left:644.6px;top:32.8px;width:0.9px;height:3px;background:#b0b0b0"></div>
<!-- color panel header -->
<div class="a" style="left:523px;top:37px;width:127px;height:15.5px;background:#464646"></div>
<div class="a" style="left:523.8px;top:37px;width:20.7px;height:15.5px;background:#535353"></div>
<div class="t" style="left:528.2px;top:42px;font-size:6.2px;color:#e8e8e8;font-weight:bold">颜色</div>
<div class="t" style="left:549px;top:42px;font-size:6.2px;color:#b8b8b8">色板</div>
<div class="a" style="left:640px;top:43px;width:6px;height:5.5px;border:0.8px solid #a0a0a0"></div><div class="a" style="left:641px;top:45.2px;width:4px;height:0.8px;background:#a0a0a0"></div>
<!-- swatches -->
<div class="a" style="left:534.5px;top:65px;width:9.5px;height:10px;background:#fff"></div>
<div class="a" style="left:528px;top:59px;width:11px;height:11px;background:#2a2a2a;border:1px solid #aaa"></div>
<!-- color field -->
<div class="a" style="left:547.7px;top:56.8px;width:73.3px;height:50px;background:linear-gradient(to bottom,rgba(0,0,0,0),#000),linear-gradient(to right,#fff,#f00)"></div>
<div class="a" style="left:546px;top:55px;width:4px;height:4px;border-radius:50%;border:1px solid #eee"></div>
<div class="a" style="left:629.7px;top:56.5px;width:11.5px;height:51px;background:linear-gradient(to bottom,#f00,#f0f 17%,#00f 33%,#0ff 50%,#0f0 67%,#ff0 83%,#f00)"></div>
<svg style="left:625.5px;top:104px" width="4" height="5" viewBox="0 0 4 5"><path d="M0 0 L4 2.5 L0 5Z" fill="#eee"/></svg>

<!-- ================= layers panel ================= -->
<div class="a" style="left:523px;top:110px;width:127px;height:1px;background:#444"></div>
<div class="a" style="left:523px;top:111px;width:127px;height:17px;background:#464646"></div>
<div class="a" style="left:523.8px;top:111px;width:20.7px;height:17px;background:#535353"></div>
<div class="t" style="left:528.2px;top:116.5px;font-size:6.2px;color:#e8e8e8;font-weight:bold">图层</div>
<div class="t" style="left:549.5px;top:116.5px;font-size:6.2px;color:#b8b8b8">通道</div>
<div class="t" style="left:571.5px;top:116.5px;font-size:6.2px;color:#b8b8b8">路径</div>
<div class="a" style="left:640px;top:117px;width:6px;height:5.5px;border:0.8px solid #a0a0a0"></div><div class="a" style="left:641px;top:119.2px;width:4px;height:0.8px;background:#a0a0a0"></div>

<!-- filter row -->
<div class="a" style="left:528px;top:133px;width:38.5px;height:9.7px;background:#494949;border-radius:1px"></div>
<svg style="left:529.2px;top:135px" width="6" height="6" viewBox="0 0 7 7"><circle cx="4.2" cy="2.8" r="2" fill="none" stroke="#c8c8c8" stroke-width="1"/><path d="M2.8 4.2 L0.8 6.2" stroke="#c8c8c8" stroke-width="1.1"/></svg>
<div class="t" style="left:537px;top:135px;font-size:6px;color:#aaa">类型</div>
<div class="a" style="left:571.5px;top:134px;width:1px;height:8px;background:#464646"></div>
<svg style="left:574.5px;top:134.5px" width="7" height="7" viewBox="0 0 7 7"><rect x="0.6" y="0.8" width="5.8" height="5.4" fill="none" stroke="#b4b4b4" stroke-width="0.9"/><path d="M1.4 5.4 L2.8 3.2 L3.8 4.4 L4.6 3.6 L5.6 5.4Z" fill="#b4b4b4"/></svg>
<svg style="left:587.5px;top:134.5px" width="7" height="7" viewBox="0 0 7 7"><circle cx="3.5" cy="3.5" r="2.8" fill="none" stroke="#b4b4b4" stroke-width="0.9"/><path d="M3.5 0.7 A2.8 2.8 0 0 1 3.5 6.3 Z" fill="#b4b4b4"/></svg>
<svg style="left:600px;top:134.5px" width="7" height="7" viewBox="0 0 7 7"><path d="M0.8 1.6 V0.8 H6.2 V1.6 M3.5 0.8 V6.4 M2.4 6.4 H4.6" fill="none" stroke="#b4b4b4" stroke-width="1.1"/></svg>
<svg style="left:613px;top:134.5px" width="7" height="7" viewBox="0 0 7 7"><rect x="1.2" y="1.2" width="4.6" height="4.6" fill="none" stroke="#b4b4b4" stroke-width="0.8"/><rect x="0.2" y="0.2" width="1.8" height="1.8" fill="#b4b4b4"/><rect x="5" y="0.2" width="1.8" height="1.8" fill="#b4b4b4"/><rect x="0.2" y="5" width="1.8" height="1.8" fill="#b4b4b4"/><rect x="5" y="5" width="1.8" height="1.8" fill="#b4b4b4"/></svg>
<svg style="left:627px;top:134.5px" width="7" height="7" viewBox="0 0 7 7"><path d="M0.8 6.4 V3.2 Q0.8 0.8 3.5 0.8 Q6.2 0.8 6.2 3.2 V6.4 Z" fill="none" stroke="#b4b4b4" stroke-width="0.9"/><rect x="2.4" y="3.6" width="2.4" height="2.8" fill="#b4b4b4"/></svg>
<svg style="left:640.5px;top:133px" width="7" height="7" viewBox="0 0 7 7"><circle cx="3.5" cy="3.5" r="2.9" fill="#c4c4c4"/></svg>
<div class="a" style="left:523px;top:145px;width:118px;height:0.8px;background:#484848"></div>
<div class="a" style="left:523px;top:159px;width:118px;height:0.8px;background:#484848"></div>


<!-- blend row -->
<div class="a" style="left:528px;top:147.6px;width:57px;height:9px;background:#4a4a4a;border-radius:1px"></div>
<div class="t" style="left:531px;top:149px;font-size:6px;color:#9a9a9a">正常</div>
<div class="t" style="left:590px;top:149px;font-size:6px;color:#9a9a9a">不透明度:</div>
<div class="a" style="left:615px;top:147.6px;width:25px;height:9px;background:#4e4e4e;border-radius:1px"></div>

<!-- lock row -->
<div class="t" style="left:526px;top:163px;font-size:6px;color:#9a9a9a">锁定:</div>
<div class="t" style="left:602px;top:163px;font-size:6px;color:#9a9a9a">填充:</div>
<div class="a" style="left:615px;top:161.5px;width:25px;height:9px;background:#4e4e4e;border-radius:1px"></div>
<svg style="left:542.5px;top:162.5px" width="7" height="7" viewBox="0 0 7 7"><rect x="0.5" y="0.5" width="1.2" height="1.2" fill="#9a9a9a"/><rect x="0.5" y="2.9" width="1.2" height="1.2" fill="#9a9a9a"/><rect x="0.5" y="5.3" width="1.2" height="1.2" fill="#9a9a9a"/><rect x="2.9" y="0.5" width="1.2" height="1.2" fill="#9a9a9a"/><rect x="2.9" y="2.9" width="1.2" height="1.2" fill="#9a9a9a"/><rect x="2.9" y="5.3" width="1.2" height="1.2" fill="#9a9a9a"/><rect x="5.3" y="0.5" width="1.2" height="1.2" fill="#9a9a9a"/><rect x="5.3" y="2.9" width="1.2" height="1.2" fill="#9a9a9a"/><rect x="5.3" y="5.3" width="1.2" height="1.2" fill="#9a9a9a"/><path d="M0.5 0.5 L7.3 7.3 M7.3 0.5 L0.5 7.3" stroke="#9a9a9a" stroke-width="0.6"/></svg>
<svg style="left:554px;top:162px" width="8" height="9" viewBox="0 0 8 9"><path d="M7.4 0.6 L3.6 5" stroke="#9c9c9c" stroke-width="0.9"/><path d="M3.4 4.4 Q4.6 5.4 3.8 6.4 Q2.8 7.8 0.8 8.2 Q1.2 6.2 2.6 5Z" fill="#9c9c9c"/></svg>
<svg style="left:565px;top:162px" width="9" height="9" viewBox="0 0 9 9"><path d="M4.5 0.6 L5.8 2 H5 V4 H7 V3.2 L8.4 4.5 L7 5.8 V5 H5 V7 H5.8 L4.5 8.4 L3.2 7 H4 V5 H2 V5.8 L0.6 4.5 L2 3.2 V4 H4 V2 H3.2 Z" fill="#9c9c9c"/></svg>
<svg style="left:578px;top:162px" width="9" height="9" viewBox="0 0 9 9"><path d="M2 0.6 V6.6 H8.4" fill="none" stroke="#9c9c9c" stroke-width="1"/><path d="M0.6 2 H6.6 V8.4" fill="none" stroke="#9c9c9c" stroke-width="1"/></svg>
<svg style="left:590.5px;top:161.5px" width="8" height="9" viewBox="0 0 8 9"><path d="M2.2 4 V2.6 A1.8 1.8 0 0 1 5.8 2.6 V4" fill="none" stroke="#c0c0c0" stroke-width="1"/><rect x="1" y="4" width="6" height="4.4" fill="#b0b0b0"/></svg>


<!-- layer row -->
<div class="a" style="left:523px;top:174px;width:118px;height:1px;background:#4a4a4a"></div>
<div class="a" style="left:540px;top:175.6px;width:101px;height:21px;background:#6a6a6a"></div>
<div class="a" style="left:541.5px;top:177px;width:11px;height:18px;background:#fff;border:1px solid #2e2e2e"></div>
<div class="t" style="left:557px;top:183.8px;font-size:6.2px;color:#f0f0f0;font-weight:bold">背景</div>
<svg style="left:528px;top:182px" width="9" height="8" viewBox="0 0 9 8">
 <path d="M0.5 4 Q4.5 -0.5 8.5 4 Q4.5 8.5 0.5 4Z" fill="#e0e0e0"/>
 <circle cx="4.5" cy="4" r="1.5" fill="#535353"/>
</svg>
<svg style="left:624.5px;top:181.5px" width="8" height="9" viewBox="0 0 8 9">
 <path d="M2 4 V2.5 A2 2 0 0 1 6 2.5 V4" fill="none" stroke="#ddd" stroke-width="1"/>
 <rect x="1" y="4" width="6" height="4.5" fill="none" stroke="#ddd" stroke-width="1"/>
</svg>
<div class="a" style="left:641.5px;top:128px;width:1px;height:335px;background:#4a4a4a"></div>

<!-- layer panel bottom bar -->
<div class="a" style="left:523px;top:462.5px;width:127px;height:13.5px;background:#4d4d4d"></div>
<svg style="left:537px;top:465.5px" width="9" height="7" viewBox="0 0 9 7"><path d="M3.6 1.4 H2.4 A2 2 0 0 0 2.4 5.6 H3.6 M5.4 1.4 H6.6 A2 2 0 0 1 6.6 5.6 H5.4 M3 3.5 H6" fill="none" stroke="#8a8a8a" stroke-width="0.9"/></svg>
<div class="t" style="left:552.5px;top:464.5px;font-size:8px;color:#9c9c9c;font-family:\"Liberation Serif\",serif"><i>fx</i></div>
<svg style="left:567px;top:465px" width="9" height="8" viewBox="0 0 9 8"><rect x="0.6" y="0.6" width="7.8" height="6.8" fill="#e0e0e0"/><circle cx="4.5" cy="4" r="2" fill="#535353"/></svg>
<svg style="left:581px;top:465px" width="8" height="8" viewBox="0 0 8 8"><circle cx="4" cy="4" r="3.2" fill="none" stroke="#d0d0d0" stroke-width="0.9"/><path d="M4 0.8 A3.2 3.2 0 0 1 4 7.2Z" fill="#d0d0d0"/></svg>
<svg style="left:596.5px;top:465px" width="10" height="8" viewBox="0 0 10 8"><path d="M0.6 1 H3.6 L4.6 2 H9.2 V7.4 H0.6 Z" fill="#d8d8d8"/></svg>
<svg style="left:611.5px;top:464.5px" width="9" height="9" viewBox="0 0 9 9"><path d="M0.8 1.4 H5.6 L8.2 4 V8.2 H0.8 Z" fill="none" stroke="#d0d0d0" stroke-width="1"/><path d="M3 3.2 H5.6 V6" fill="none" stroke="#d0d0d0" stroke-width="0.9"/></svg>
<svg style="left:626px;top:464.5px" width="8" height="9" viewBox="0 0 8 9"><rect x="1.4" y="2.2" width="5.2" height="6.2" fill="#6a6a6a"/><rect x="0.6" y="1" width="6.8" height="1" fill="#6a6a6a"/><rect x="2.8" y="0" width="2.4" height="1.2" fill="#6a6a6a"/></svg>
<div class="a" style="left:600px;top:474px;width:1.2px;height:1.2px;background:#999"></div>


<!-- ================= watermark ================= -->
<div class="a" style="left:462px;top:372px;width:163px;height:79px;background:#fff"></div>
<div class="t" style="left:482px;top:388.8px;font-size:30px;font-weight:bold;color:#20be3a;transform:scaleY(0.93);transform-origin:0 100%">百科全说</div>
<div class="t" style="left:490.4px;top:426px;font-size:17.2px;color:#8a8a8a">助你轻松解决</div>

</body></html>
